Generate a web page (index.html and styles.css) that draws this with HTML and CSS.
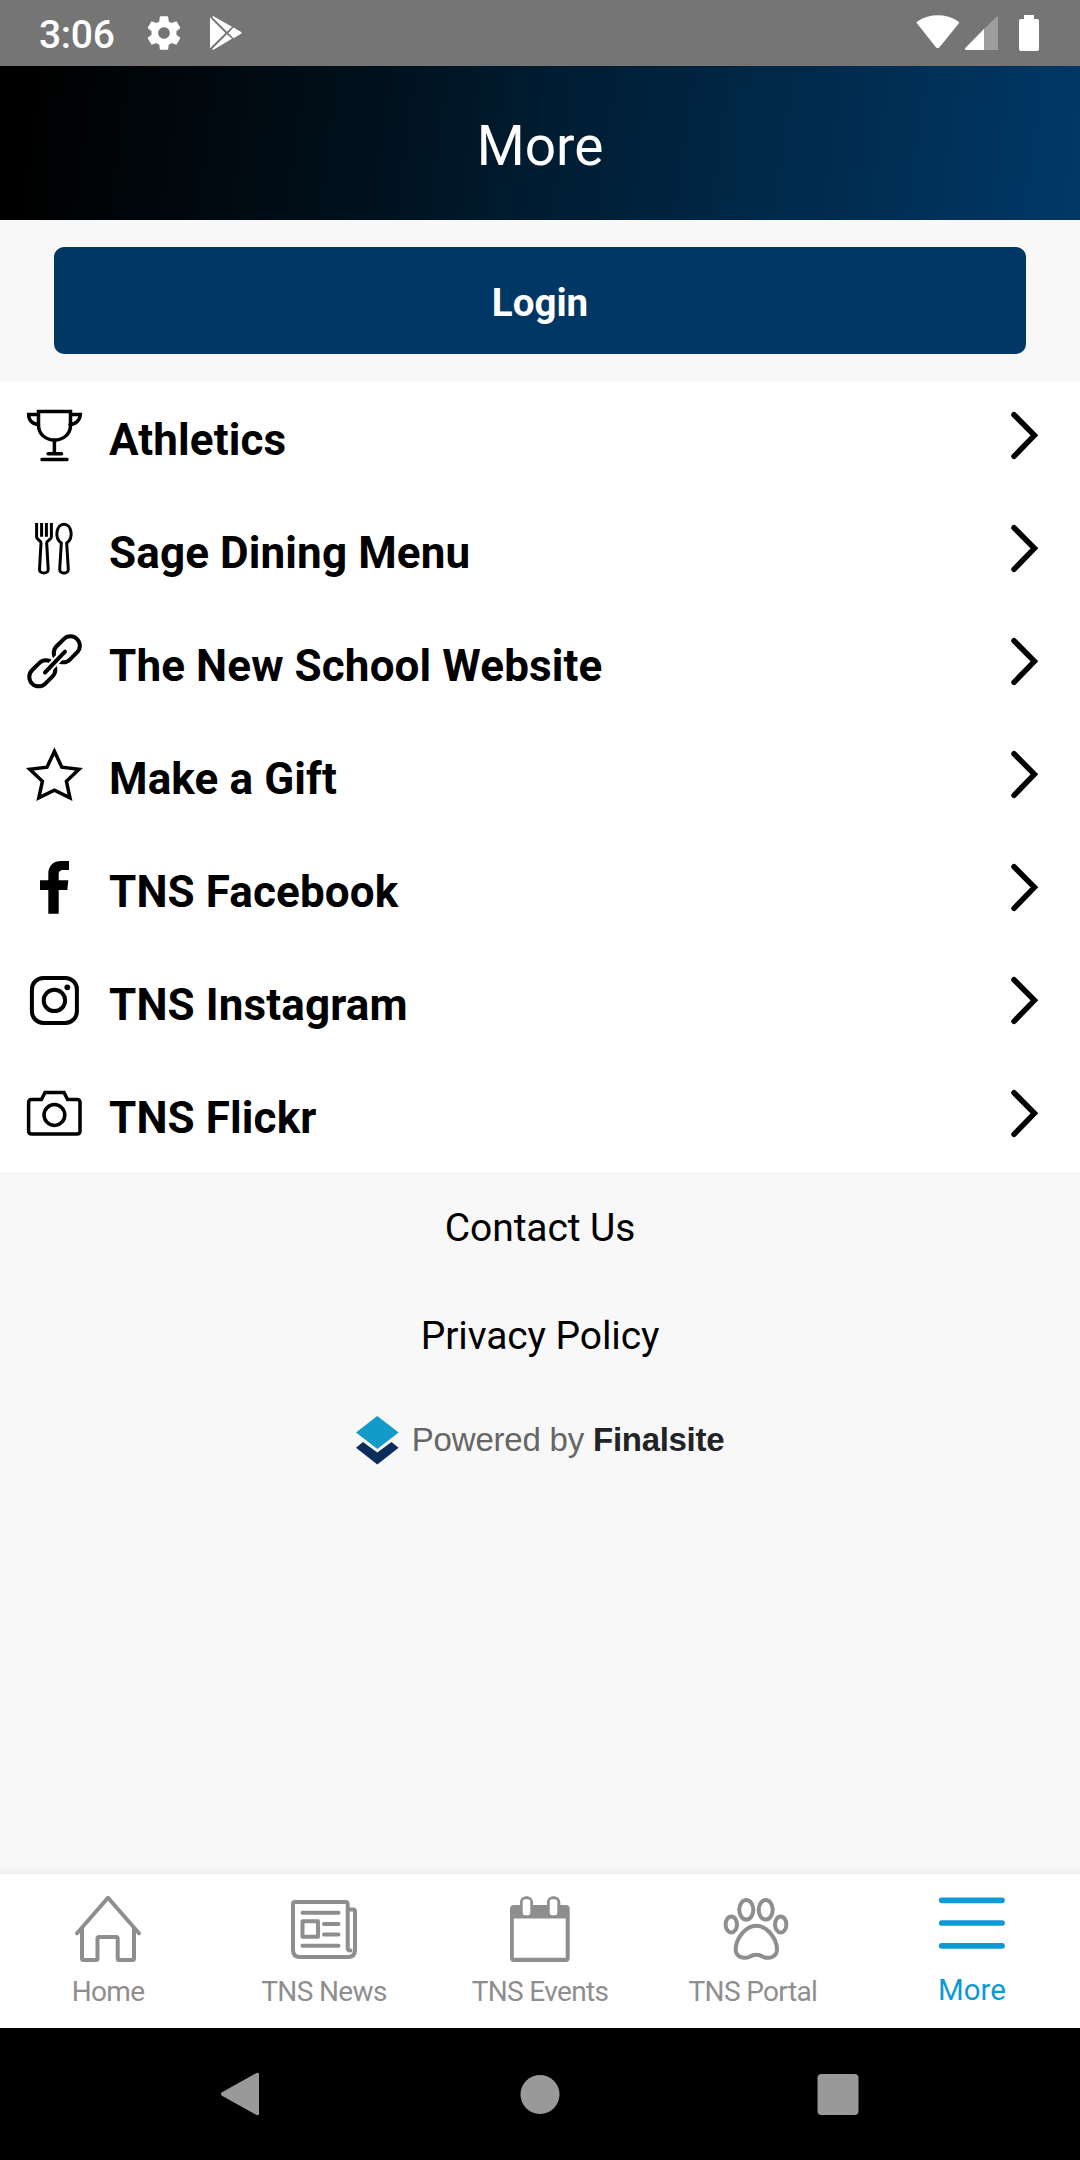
FILE: index.html
```html
<!DOCTYPE html>
<html lang="en">
<head>
<meta charset="utf-8">
<title>More</title>
<link rel="stylesheet" href="styles.css">
</head>
<body>
<div class="status">
  <span class="clock">3:06</span>
  <svg class="gear" width="40" height="40" viewBox="0 0 24 24"><path fill="#fff" d="M19.43 12.98c.04-.32.07-.64.07-.98s-.03-.66-.07-.98l2.11-1.65c.19-.15.24-.42.12-.64l-2-3.46c-.12-.22-.39-.3-.61-.22l-2.49 1c-.52-.4-1.08-.73-1.69-.98l-.38-2.65C14.460 2.180 14.250 2 14 2h-4c-.25 0-.46.18-.49.42l-.38 2.65c-.61.25-1.170.59-1.690.98l-2.490-1c-.23-.09-.49 0-.61.22l-2 3.460c-.13.22-.07.49.12.64l2.110 1.650c-.04.32-.07.65-.07.98s.03.66.07.98l-2.110 1.650c-.19.15-.24.42-.12.64l2 3.460c.12.22.39.3.61.22l2.490-1c.52.4 1.080.73 1.690.98l.38 2.650c.03.24.24.42.49.42h4c.25 0 .46-.18.49-.42l.38-2.650c.61-.25 1.170-.59 1.690-.98l2.490 1c.23.09.49 0 .61-.22l2-3.460c.12-.22.07-.49-.12-.64l-2.110-1.650zM12 15.500c-1.930 0-3.500-1.570-3.500-3.500s1.570-3.500 3.500-3.500 3.500 1.570 3.500 3.500-1.570 3.500-3.500 3.500z"/></svg>
  <svg class="play" width="32" height="34" viewBox="0 0 32 34"><g fill="#fff"><path d="M0 1.500 15.400 17 0 32.300z"/><path d="M3 0 22 10.800 16.900 15.800 2.200 1z"/><path d="M3 34 22 22.800 16.900 18.200 2.200 33z"/><path d="M23.500 11.600 31.500 16.300v1.200L23.500 22.200 18.400 17z"/></g></svg>
  <svg class="signals" width="126" height="40" viewBox="0 0 126 40"><path fill="#fff" d="M1.500 9C.3 8 .4 7 1.600 6.200 14-1.700 30-1.700 42 6.200c1.200.8 1.300 1.800.3 2.800L23.500 32.200c-1 1.200-2.600 1.200-3.600 0z"/><path fill="#9e9e9e" d="M67 15 80 2.200c1.200-1 2-.8 2 .6V34q0 1-1 1H67z"/><path fill="#fff" d="M68 14V35H50.500c-1.600 0-2-1-1-2.200z"/><path fill="#fff" d="M108 0h10v4h3q2 0 2 2v28q0 2-2 2h-16q-2 0-2-2V6q0-2 2-2h3z"/></svg>
</div>
<header class="header">More</header>
<div class="login-area"><button class="login">Login</button></div>
<nav class="menu">
  <a class="row"><svg class="icon" viewBox="0 0 60 60"><path stroke-linejoin="miter" d="M14.500 6.500H46.500V20C46.500 40 14.500 40 14.500 20Z"/><path d="M14 9.500H4.700C4.500 15 8.500 19.300 14.500 19.500M47 9.500h9.300C56 15 52 19.300 46 19.500M30.400 35.500V48.500M24 48.700H37.500M18 54.400H43"/></svg><span>Athletics</span><svg class="chevron" viewBox="0 0 60 60"><path d="M18 9.700 38.400 30.300 18 51.300"/></svg></a>
  <a class="row"><svg class="icon thin" viewBox="0 0 60 60"><path stroke-linecap="butt" d="M12.600 5V19C12.600 21.500 17 22.500 17 25L15.500 51.500C15.500 56.200 24.200 56.200 24.200 51.500L22.700 25C22.700 22.500 27.400 21.500 27.400 19V5"/><path stroke-linecap="butt" stroke-width="3" d="M17.600 5V18.700M22.400 5V18.700"/><path d="M37.300 25C30 20 32.300 6.300 40 6.300S50 20 42.700 25L44.300 51.500C44.300 56.200 35.700 56.200 35.700 51.500Z"/></svg><span>Sage Dining Menu</span><svg class="chevron" viewBox="0 0 60 60"><path d="M18 9.700 38.400 30.300 18 51.300"/></svg></a>
  <a class="row"><svg class="icon link" viewBox="0 0 60 60"><rect x="28.300" y="8.900" width="29" height="18.800" rx="9.400" transform="rotate(-45 42.800 18.300)"/><rect x="3.800" y="32.900" width="29" height="18.800" rx="9.400" transform="rotate(-45 18.300 42.300)"/><path class="knock" d="M22.500 40 39.500 22"/><path d="M21 41.500 41 20.700"/></svg><span>The New School Website</span><svg class="chevron" viewBox="0 0 60 60"><path d="M18 9.700 38.400 30.300 18 51.300"/></svg></a>
  <a class="row"><svg class="icon" viewBox="0 0 60 60"><path d="M30.400 7.300 37.800 23.200 55 25.200 42.400 37.300 46 53.800 30.400 46.200 14.800 53.800 18.400 37.300 5.800 25.200 23 23.200Z"/></svg><span>Make a Gift</span><svg class="chevron" viewBox="0 0 60 60"><path d="M18 9.700 38.400 30.300 18 51.300"/></svg></a>
  <a class="row"><svg class="icon solid" viewBox="0 0 60 60"><path d="M24.300 56.700V33H16V23.300H24.300V17C24.300 8.500 29.500 4 37.500 4H45V13H39.500C36 13 34.700 14.500 34.700 17.500V23.300H44.300L43.300 33H34.700V56.700Z"/></svg><span>TNS Facebook</span><svg class="chevron" viewBox="0 0 60 60"><path d="M18 9.700 38.400 30.300 18 51.300"/></svg></a>
  <a class="row"><svg class="icon link" viewBox="0 0 60 60"><rect x="7.900" y="7.900" width="45" height="45" rx="11.500"/><circle cx="30.400" cy="30.400" r="10.700"/><circle cx="43.300" cy="17.300" r="2.900" fill="#000" stroke="none"/></svg><span>TNS Instagram</span><svg class="chevron" viewBox="0 0 60 60"><path d="M18 9.700 38.400 30.300 18 51.300"/></svg></a>
  <a class="row"><svg class="icon" viewBox="0 0 60 60"><path d="M7.600 16.500H17.400L21 9.500H40L43.600 16.500H53Q56 16.500 56 19.500V48Q56 51 53 51H7.600Q4.600 51 4.600 48V19.500Q4.600 16.500 7.600 16.500Z"/><circle cx="30.400" cy="32" r="10.400"/></svg><span>TNS Flickr</span><svg class="chevron" viewBox="0 0 60 60"><path d="M18 9.700 38.400 30.300 18 51.300"/></svg></a>
</nav>
<main class="footer">
  <a class="flink">Contact Us</a>
  <a class="flink">Privacy Policy</a>
  <div class="powered">
    <svg width="43" height="50" viewBox="0 0 43 50"><path fill="#0b2d5b" d="M0 32.700 7 27 21.300 37.500 35.500 27 42.600 32.700 21.300 49.500z"/><path fill="#129bc9" d="M21.300 1 42.600 17.500 21.300 34 0 17.500z"/></svg>
    <span class="by">Powered by</span><b class="brand">Finalsite</b>
  </div>
</main>
<nav class="tabs">
  <a class="tab"><svg viewBox="0 0 72 76"><path d="M5 43.300 36 7.800 67 43.300M10 37.500V68.500Q10 70 11.500 70H24Q25.500 70 25.500 68.500V48.500Q25.500 47 27 47H44.200Q45.700 47 45.700 48.500V68.500Q45.700 70 47.200 70H60.500Q62 70 62 68.500V37.500"/></svg><span>Home</span></a>
  <a class="tab"><svg viewBox="0 0 72 76"><path d="M59.700 19.500V14Q59.700 12 57.700 12H7Q5 12 5 14V60Q5 67 12 67H60Q67 67 67 60V21.500Q67 19.500 65 19.500H59.700V57.500Q59.700 60.500 62.500 60.500M14.500 22.700H50.500M14.500 55.700H50.500M36 33.900H50.500M36 44.400H50.500M14.500 31.300H30V46.800H14.500Z"/></svg><span>TNS News</span></a>
  <a class="tab"><svg class="cal" viewBox="0 0 72 76"><path fill-rule="evenodd" d="M10 15H16V12.500C16 4 29 4 29 12.500V15H43V12.500C43 4 56.300 4 56.300 12.500V15H61.700Q65.700 15 65.700 19V68Q65.700 72 61.700 72H10Q6 72 6 68V19Q6 15 10 15ZM9.800 28.500V67.700H61.700V28.500ZM18.700 12V23Q18.700 25.300 21 25.300H24Q26.300 25.300 26.300 23V12Q26.300 9.300 24 9.300H21Q18.700 9.300 18.700 12ZM45.700 12V23Q45.700 25.300 48 25.300H51Q53.300 25.300 53.300 23V12Q53.300 9.300 51 9.300H48Q45.700 9.300 45.700 12Z"/></svg><span>TNS Events</span></a>
  <a class="tab"><svg viewBox="0 0 72 76"><ellipse cx="26.300" cy="19.800" rx="7" ry="9.800"/><ellipse cx="45.700" cy="19.800" rx="7" ry="9.800"/><ellipse cx="11.300" cy="34.500" rx="5.700" ry="8"/><ellipse cx="60.700" cy="34.500" rx="5.700" ry="8"/><path d="M36.300 35.800C46.500 35.800 57 48 57 59.500C57 66.500 50 69.500 43 66.800C39 64.200 33.600 64.200 29.600 66.800C22.500 69.500 15.700 66.500 15.700 59.500C15.700 48 26 35.800 36.300 35.800Z"/></svg><span>TNS Portal&nbsp;</span></a>
  <a class="tab active"><svg viewBox="0 0 72 76"><path d="M5.800 10.300H66M5.800 33H66M5.800 55.800H66"/></svg><span>More</span></a>
</nav>
<div class="sysnav">
  <svg viewBox="0 0 60 60"><path d="M19.500 28.500 54.500 9Q57 8 57 10.500V49.500Q57 52 54.500 51L19.500 31.500Q18.500 30 19.500 28.500Z"/></svg>
  <svg viewBox="0 0 60 60"><circle cx="30" cy="30.500" r="19.500"/></svg>
  <svg viewBox="0 0 60 60"><rect x="9.500" y="10" width="41" height="41" rx="4"/></svg>
</div>
</body>
</html>
```
FILE: styles.css
```css
* { box-sizing: border-box; }
body {
  margin: 0;
  width: 1080px;
  height: 2160px;
  display: flex;
  flex-direction: column;
  overflow: hidden;
  background: #f8f8f8;
  color: #000;
  font-family: Roboto, "Liberation Sans", sans-serif;
}
svg { display: block; flex: none; }
.status {
  height: 66px;
  background: #757575;
  color: #fff;
  display: flex;
  align-items: flex-start;
  padding: 0 38px 0 39px;
}
.clock { font-size: 39px; font-weight: 500; letter-spacing: -.3px; line-height: 46px; padding-top: 12px; width: 105px; }
.gear { margin-top: 13px; }
.play { margin: 16px 0 0 26px; }
.signals { margin: 15px 0 0 auto; }
.header {
  height: 154px;
  background: linear-gradient(98deg, #000 3%, #00111d 35%, #001c31 50%, #00294a 72%, #003866 99%);
  color: #fff;
  font-size: 55px;
  line-height: 160px;
  text-align: center;
}
.login-area { height: 161px; padding: 27px 54px; }
.login {
  display: block;
  width: 100%;
  height: 107px;
  padding: 4px 0 0;
  border: 0;
  border-radius: 10px;
  background: #003764;
  color: #fff;
  font: 700 38.500px Roboto, sans-serif;
}
.menu { background: #fff; }
.row { display: flex; height: 113px; padding: 24px 24px 0; }
.row span { flex: 1; margin-left: 25px; font-size: 44px; font-weight: 700; letter-spacing: .12px; line-height: 70px; }
.icon, .chevron { width: 60px; height: 60px; fill: none; stroke: #000; stroke-linecap: round; }
.icon { stroke-width: 3.500px; stroke-linejoin: miter; }
.icon.thin { stroke-width: 3px; }
.icon.link { stroke-width: 4px; }
.icon.solid { fill: #000; stroke: none; }
.icon .knock { stroke: #fff; stroke-width: 8px; stroke-linecap: butt; }
.chevron { stroke-width: 5.500px; }
.footer {
  height: 702px;
  display: flex;
  flex-direction: column;
  align-items: center;
  background: linear-gradient(to top, #ededed, #f8f8f8 8px);
}
.flink { height: 108px; font-size: 39px; letter-spacing: -.1px; line-height: 112px; }
.powered {
  display: flex;
  align-items: center;
  height: 108px;
  font: 33px/50px "Liberation Sans", sans-serif;
  padding-bottom: 4px;
}
.by { margin-left: 13px; color: #666; letter-spacing: -.2px; }
.brand { margin-left: 9px; color: #222326; letter-spacing: -.3px; }
.tabs { height: 154px; background: #fff; display: flex; }
.tab { width: 216px; padding-top: 16px; display: flex; flex-direction: column; align-items: center; color: #8e8e8f; font-size: 28px; letter-spacing: -.65px; line-height: 32px; }
.tab svg { width: 72px; height: 76px; fill: none; stroke: #8e8e8f; stroke-width: 4px; stroke-linecap: round; stroke-linejoin: round; }
.tab .cal { fill: #8e8e8f; stroke: none; }
.tab span { margin-top: 10px; }
.tab.active { color: #0b9ad6; font-size: 29.500px; letter-spacing: 0; }
.tab.active svg { stroke: #0b9ad6; stroke-width: 5.700px; }
.tab.active span { margin-top: 8px; }
.sysnav { height: 132px; background: #000; display: grid; grid-template-columns: 308px 298px 60px; padding: 36px 0 0 202px; }
.sysnav svg { width: 60px; height: 60px; fill: #999; }
```
